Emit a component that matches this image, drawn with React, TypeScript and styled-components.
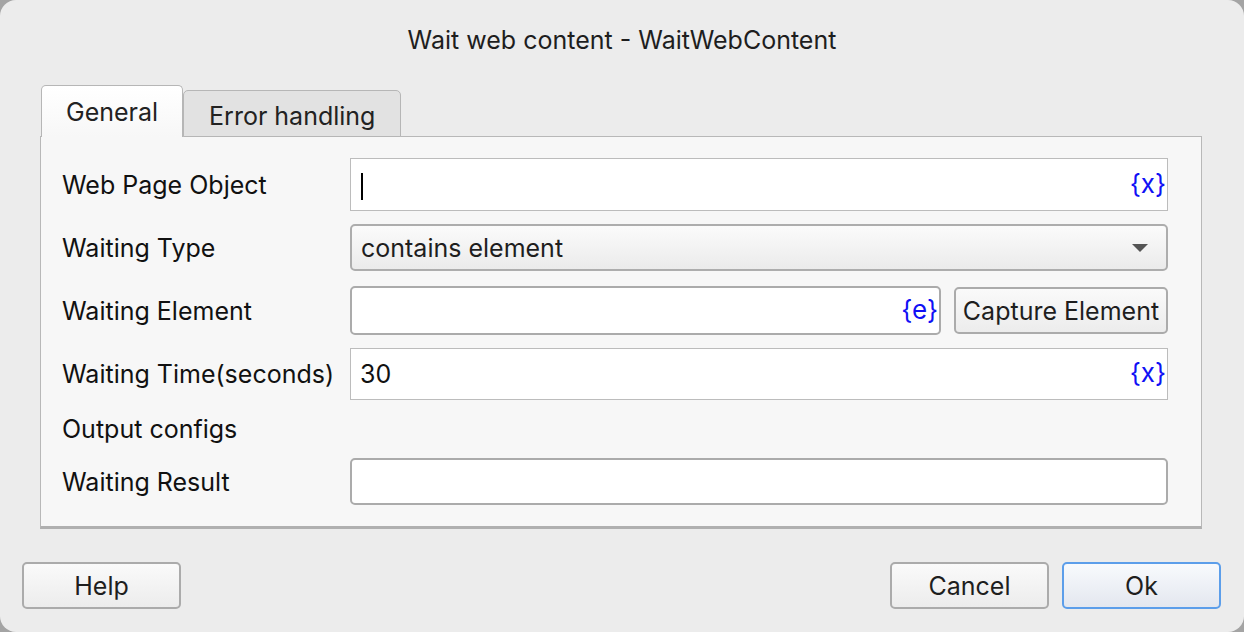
import styled, { createGlobalStyle } from "styled-components";

const Global = createGlobalStyle`
  html, body {
    margin: 0;
    padding: 0;
    background: #a4a4a4;
  }
  body {
    font-family: Inter, "Noto Sans", "Liberation Sans", sans-serif;
    color: #1c1c1c;
  }
`;

const Window = styled.div`
  width: 1244px;
  height: 632px;
  box-sizing: border-box;
  background: #ececec;
  border-radius: 16px;
  display: flex;
  flex-direction: column;
  overflow: hidden;
`;

const Title = styled.div`
  height: 85px;
  padding-top: 23px;
  box-sizing: border-box;
  text-align: center;
  font-size: 25px;
  line-height: 34px;
  color: #1e1e1e;
`;

const Body = styled.div`
  margin: 0 42px 0 40px;
  display: flex;
  flex-direction: column;
`;

const TabBar = styled.div`
  display: flex;
  align-items: flex-end;
  height: 51px;
  margin-left: 1px;
`;

const Tab = styled.div<{ active?: boolean }>`
  box-sizing: border-box;
  height: ${({ active }) => (active ? "52px" : "47px")};
  padding: 0 ${({ active }) => (active ? "24px" : "25px")};
  margin-bottom: -1px;
  border: 1.5px solid #b6b6b6;
  border-bottom: ${({ active }) => (active ? "none" : "1.5px solid #b6b6b6")};
  border-radius: 5px 5px 0 0;
  background: ${({ active }) =>
    active ? "linear-gradient(#ffffff, #f7f7f7)" : "#e2e2e2"};
  font-size: 25px;
  display: flex;
  align-items: center;
  padding-top: ${({ active }) => (active ? "0" : "4px")};
  position: relative;
  z-index: ${({ active }) => (active ? 2 : 1)};
  color: #222;
`;

const Pane = styled.div`
  box-sizing: border-box;
  height: 393px;
  background: #f7f7f7;
  border: 1.5px solid #b8b8b8;
  border-bottom: 3px solid #b0b0b0;
  padding: 21px 33px 0 21px;
  display: flex;
  flex-direction: column;
  gap: 13px;
`;

const Row = styled.div<{ h: number; gapTop?: number }>`
  display: grid;
  grid-template-columns: 288px 1fr;
  align-items: center;
  height: ${({ h }) => h}px;
  margin-top: ${({ gapTop }) => gapTop ?? 0}px;
`;

const Label = styled.div`
  font-size: 25px;
  color: #111;
  white-space: nowrap;
`;

const Field = styled.div<{ rounded?: boolean }>`
  box-sizing: border-box;
  height: 100%;
  background: #fff;
  border: ${({ rounded }) =>
    rounded ? "2px solid #ababab" : "1.5px solid #bcbcbc"};
  border-radius: ${({ rounded }) => (rounded ? "5px" : "0")};
  display: flex;
  align-items: center;
  padding: 0 1px 0 9px;
  font-size: 25px;
  color: #111;
`;

const FieldText = styled.span`
  flex: 1;
`;

const Caret = styled.span`
  display: inline-block;
  width: 2px;
  height: 27px;
  background: #000;
  margin-left: 1px;
  vertical-align: middle;
`;

const VarTag = styled.span`
  color: #1010f5;
  font-size: 26px;
  padding-bottom: 3px;
`;

const Select = styled.div`
  box-sizing: border-box;
  height: 100%;
  border: 2px solid #adadad;
  border-radius: 5px;
  background: linear-gradient(#fbfbfb, #ebebeb);
  display: flex;
  align-items: center;
  padding: 0 18px 0 9px;
  font-size: 25px;
  color: #1e1e1e;
`;

const Arrow = styled.span`
  width: 0;
  height: 0;
  border-left: 8px solid transparent;
  border-right: 8px solid transparent;
  border-top: 8px solid #555;
`;

const Split = styled.div`
  display: flex;
  gap: 13px;
  height: 100%;
  align-items: center;
`;

const PushButton = styled.button<{ primary?: boolean; w?: number; h?: number }>`
  box-sizing: border-box;
  width: ${({ w }) => (w ? `${w}px` : "auto")};
  height: ${({ h }) => h ?? 47}px;
  padding: 0 4px;
  border: 2px solid ${({ primary }) => (primary ? "#5c9eea" : "#ababab")};
  border-radius: 5px;
  background: ${({ primary }) =>
    primary
      ? "linear-gradient(#f8fafd, #e3e7ef)"
      : "linear-gradient(#fafafa, #ececec)"};
  font-family: inherit;
  font-size: 25px;
  color: #1e1e1e;
  white-space: nowrap;
  flex-shrink: 0;
`;

const Footer = styled.div`
  display: flex;
  align-items: center;
  margin-top: auto;
  padding: 0 23px 23px 22px;
  gap: 13px;
`;

const Spacer = styled.div`
  flex: 1;
`;

export default function App() {
  return (
    <>
      <Global />
      <Window>
        <Title>Wait web content - WaitWebContent</Title>
        <Body>
          <TabBar>
            <Tab active>General</Tab>
            <Tab>Error handling</Tab>
          </TabBar>
          <Pane>
            <Row h={53}>
              <Label>Web Page Object</Label>
              <Field>
                <FieldText>
                  <Caret />
                </FieldText>
                <VarTag>{"{x}"}</VarTag>
              </Field>
            </Row>
            <Row h={47}>
              <Label>Waiting Type</Label>
              <Select>
                <FieldText>contains element</FieldText>
                <Arrow />
              </Select>
            </Row>
            <Row h={49} gapTop={2}>
              <Label>Waiting Element</Label>
              <Split>
                <Field rounded style={{ flex: 1 }}>
                  <FieldText />
                  <VarTag>{"{e}"}</VarTag>
                </Field>
                <PushButton w={214} h={47}>
                  Capture Element
                </PushButton>
              </Split>
            </Row>
            <Row h={52}>
              <Label>Waiting Time(seconds)</Label>
              <Field>
                <FieldText>30</FieldText>
                <VarTag>{"{x}"}</VarTag>
              </Field>
            </Row>
            <Row h={32}>
              <Label>Output configs</Label>
            </Row>
            <Row h={47}>
              <Label>Waiting Result</Label>
              <Field rounded>
                <FieldText />
              </Field>
            </Row>
          </Pane>
        </Body>
        <Footer>
          <PushButton w={159}>Help</PushButton>
          <Spacer />
          <PushButton w={159}>Cancel</PushButton>
          <PushButton w={159} primary>
            Ok
          </PushButton>
        </Footer>
      </Window>
    </>
  );
}
